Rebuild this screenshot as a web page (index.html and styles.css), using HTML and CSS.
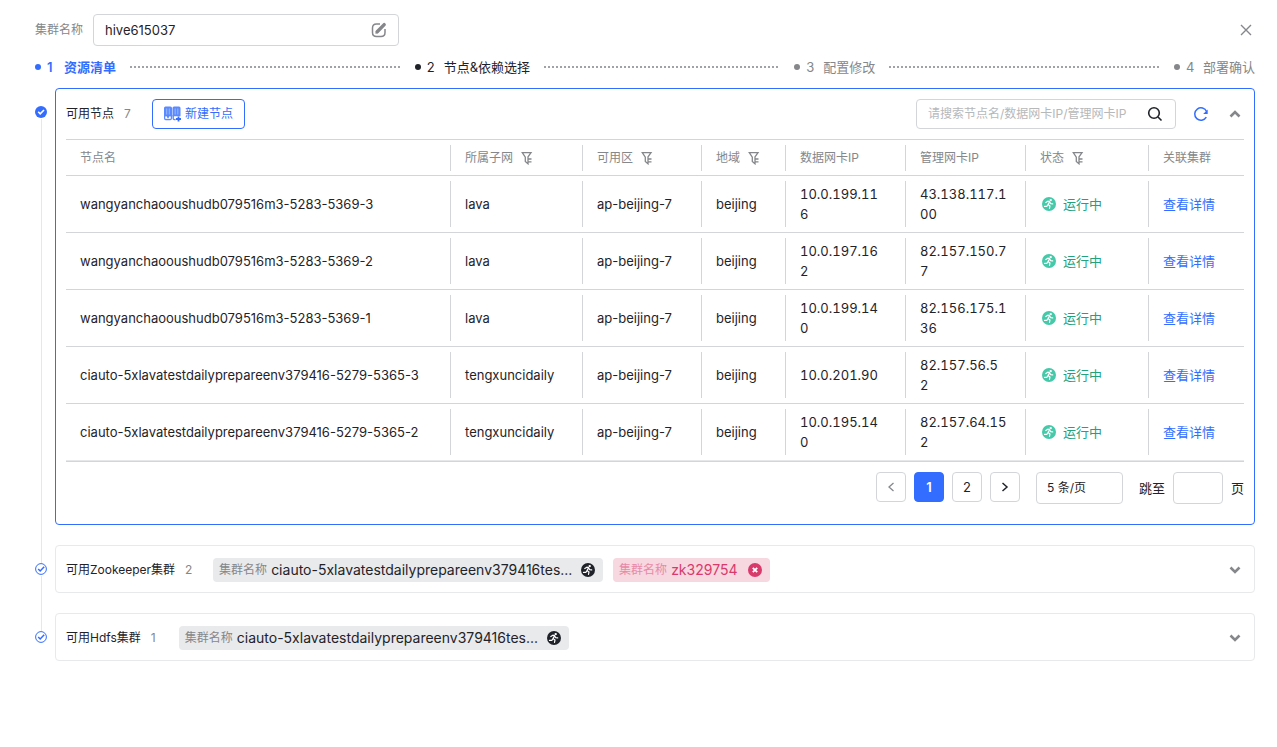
FILE: index.html
```html
<!DOCTYPE html>
<html lang="zh-CN">
<head>
    <meta charset="UTF-8">
    <title>部署集群</title>
    <link rel="stylesheet" href="styles.css">
</head>
<body>
<!--图标-->
<svg class="sprite" aria-hidden="true">
    <symbol id="filter" viewBox="0 0 12 14">
        <path d="M7 5.800L10 1.700H1.300l3 4.500v4.300L7 12.800zM7 8h3.500M7 10.800h3.500" fill="none" stroke="currentColor" stroke-width="1.300"/>
    </symbol>
    <symbol id="run" viewBox="0 0 14 14">
        <circle cx="7" cy="7" r="7" fill="currentColor"/>
        <circle cx="8.700" cy="3.100" r="1.200" fill="#fff"/>
        <path d="M3.800 5.500l2-1.300 1.700.5L6 7.600l2 1.300-.5 2.600M7.500 4.900l1.200 1.800 2 .2M5.900 7.900L4.800 9.400H2.500" fill="none" stroke="#fff" stroke-width="1.200" stroke-linecap="round" stroke-linejoin="round"/>
    </symbol>
    <symbol id="down" viewBox="0 0 12 8">
        <path d="M1.500 1.500L6 6l4.500-4.500" fill="none" stroke="currentColor" stroke-width="2.600"/>
    </symbol>
    <symbol id="check" viewBox="0 0 12 12">
        <circle cx="6" cy="6" r="5.400" fill="none" stroke="currentColor"/>
        <path d="M3.200 6l2 2 4-4.200" fill="none" stroke="currentColor" stroke-width="1.500"/>
    </symbol>
</svg>

<div class="page">
    <div class="top">
        <label for="clusterName">集群名称</label>
        <div class="name-box">
            <input type="text" id="clusterName" value="hive615037">
            <button class="icon-btn" aria-label="编辑">
                <svg width="16" height="16" viewBox="0 0 16 16" fill="none" stroke="currentColor"><path d="M9 2H5.500Q1.500 2 1.500 6v4.500q0 4 4 4H10q4 0 4-4V7" stroke-width="1.500"/><path d="M6.200 9.800l7-7.200" stroke-width="3.400" stroke-linecap="round"/><path d="M4.300 11.700l.7-3 2.300 2.300z" fill="currentColor" stroke="none"/></svg>
            </button>
        </div>
        <button class="icon-btn close" aria-label="关闭">
            <svg width="12" height="12" viewBox="0 0 12 12"><path d="M1 1l10 10M11 1L1 11" stroke="currentColor" stroke-width="1.400"/></svg>
        </button>
    </div>

    <div class="steps">
        <div class="step active"><i class="dot"></i><span class="num">1</span><span>资源清单</span><div class="dots"></div></div>
        <div class="step next"><i class="dot"></i><span class="num">2</span><span>节点&amp;依赖选择</span><div class="dots"></div></div>
        <div class="step"><i class="dot"></i><span class="num">3</span><span>配置修改</span><div class="dots"></div></div>
        <div class="step"><i class="dot"></i><span class="num">4</span><span>部署确认</span></div>
    </div>

    <div class="row">
        <div class="rail">
            <svg class="mark" width="12" height="12" viewBox="0 0 12 12"><circle cx="6" cy="6" r="6" fill="currentColor"/><path d="M3.200 5.800l2 2 3.800-3.800" fill="none" stroke="#fff" stroke-width="1.600"/></svg>
        </div>
        <div class="panel open">
            <div class="panel-head">
                <span class="title">可用节点</span>
                <span class="count">7</span>
                <button class="create">
                    <svg width="18" height="16" viewBox="0 0 18 16" fill="none" stroke="currentColor"><g opacity=".8"><path d="M0 2q0-1.500 1.500-1.500h5q1.500 0 1.500 1.500v8.500H0zM8.500 2q0-1.500 1.500-1.500h5q1.500 0 1.500 1.500v8.500h-8z" fill="currentColor" stroke="none"/><path d="M.7 9v3.500q0 1 1 1h4.600q1 0 1-1V9M9.200 9v3.500q0 1 1 1h1.500M3 12v-1.500h2V12" stroke-width="1.400"/></g><path d="M2.700 2.500v6M5.300 2.500v6M11.200 2.500v6M13.800 2.500v6" stroke="#fff" stroke-width=".4"/><path d="M1.500 10.500h1.500v2H1.500zM5 10.500h1.500v2H5zM10 10.500h8V16h-6v-3.500h-2z" fill="#fff" stroke="none"/><path d="M14.500 10.500v5M12 13h5" stroke-width="1.800"/></svg>
                    <span>新建节点</span>
                </button>
                <div class="search">
                    <input type="text" aria-label="搜索" placeholder="请搜索节点名/数据网卡IP/管理网卡IP">
                    <button class="icon-btn dark" aria-label="搜索"><svg width="16" height="16" viewBox="0 0 16 16" fill="none" stroke="currentColor" stroke-width="1.600"><circle cx="7" cy="7" r="5.300"/><path d="M11 11l3.500 3.500"/></svg></button>
                </div>
                <button class="icon-btn refresh" aria-label="刷新"><svg width="16" height="16" viewBox="0 0 16 16" fill="none"><path d="M13.300 11.200A6.200 6.200 0 1 1 13.600 5.500" stroke="currentColor" stroke-width="1.500"/><path d="M14.700 3.500v4.500h-4.500z" fill="currentColor"/></svg></button>
                <button class="icon-btn up" aria-label="收起"><svg width="12" height="8"><use href="#down"/></svg></button>
            </div>

            <table>
                <colgroup>
                    <col class="c-node"><col class="c-net"><col class="c-zone"><col class="c-area"><col class="c-ip"><col class="c-ip"><col class="c-state"><col class="c-link">
                </colgroup>
                <thead>
                <tr>
                    <th><div>节点名</div></th>
                    <th><div>所属子网<svg width="12" height="14"><use href="#filter"/></svg></div></th>
                    <th><div>可用区<svg width="12" height="14"><use href="#filter"/></svg></div></th>
                    <th><div>地域<svg width="12" height="14"><use href="#filter"/></svg></div></th>
                    <th><div>数据网卡IP</div></th>
                    <th><div>管理网卡IP</div></th>
                    <th><div>状态<svg width="12" height="14"><use href="#filter"/></svg></div></th>
                    <th><div>关联集群</div></th>
                </tr>
                </thead>
                <tbody>
                <tr>
                    <td><div><span>wangyanchaooushudb079516m3-5283-5369-3</span></div></td>
                    <td><div><span>lava</span></div></td>
                    <td><div><span>ap-beijing-7</span></div></td>
                    <td><div><span>beijing</span></div></td>
                    <td><div class="ip"><span>10.0.199.11<br>6</span></div></td>
                    <td><div class="ip"><span>43.138.117.1<br>00</span></div></td>
                    <td><div class="state"><svg width="14" height="14"><use href="#run"/></svg><span>运行中</span></div></td>
                    <td><div><a href="#">查看详情</a></div></td>
                </tr>
                <tr>
                    <td><div><span>wangyanchaooushudb079516m3-5283-5369-2</span></div></td>
                    <td><div><span>lava</span></div></td>
                    <td><div><span>ap-beijing-7</span></div></td>
                    <td><div><span>beijing</span></div></td>
                    <td><div class="ip"><span>10.0.197.16<br>2</span></div></td>
                    <td><div class="ip"><span>82.157.150.7<br>7</span></div></td>
                    <td><div class="state"><svg width="14" height="14"><use href="#run"/></svg><span>运行中</span></div></td>
                    <td><div><a href="#">查看详情</a></div></td>
                </tr>
                <tr>
                    <td><div><span>wangyanchaooushudb079516m3-5283-5369-1</span></div></td>
                    <td><div><span>lava</span></div></td>
                    <td><div><span>ap-beijing-7</span></div></td>
                    <td><div><span>beijing</span></div></td>
                    <td><div class="ip"><span>10.0.199.14<br>0</span></div></td>
                    <td><div class="ip"><span>82.156.175.1<br>36</span></div></td>
                    <td><div class="state"><svg width="14" height="14"><use href="#run"/></svg><span>运行中</span></div></td>
                    <td><div><a href="#">查看详情</a></div></td>
                </tr>
                <tr>
                    <td><div><span>ciauto-5xlavatestdailyprepareenv379416-5279-5365-3</span></div></td>
                    <td><div><span>tengxuncidaily</span></div></td>
                    <td><div><span>ap-beijing-7</span></div></td>
                    <td><div><span>beijing</span></div></td>
                    <td><div class="ip"><span>10.0.201.90</span></div></td>
                    <td><div class="ip"><span>82.157.56.5<br>2</span></div></td>
                    <td><div class="state"><svg width="14" height="14"><use href="#run"/></svg><span>运行中</span></div></td>
                    <td><div><a href="#">查看详情</a></div></td>
                </tr>
                <tr>
                    <td><div><span>ciauto-5xlavatestdailyprepareenv379416-5279-5365-2</span></div></td>
                    <td><div><span>tengxuncidaily</span></div></td>
                    <td><div><span>ap-beijing-7</span></div></td>
                    <td><div><span>beijing</span></div></td>
                    <td><div class="ip"><span>10.0.195.14<br>0</span></div></td>
                    <td><div class="ip"><span>82.157.64.15<br>2</span></div></td>
                    <td><div class="state"><svg width="14" height="14"><use href="#run"/></svg><span>运行中</span></div></td>
                    <td><div><a href="#">查看详情</a></div></td>
                </tr>
                </tbody>
            </table>

            <div class="pager">
                <button class="page-btn prev" aria-label="上一页"><svg width="8" height="10" viewBox="0 0 8 10"><path d="M6.500 1L2 5l4.500 4" fill="none" stroke="currentColor" stroke-width="1.300"/></svg></button>
                <button class="page-btn current">1</button>
                <button class="page-btn">2</button>
                <button class="page-btn" aria-label="下一页"><svg width="8" height="10" viewBox="0 0 8 10"><path d="M1.500 1L6 5 1.500 9" fill="none" stroke="currentColor" stroke-width="1.500"/></svg></button>
                <select class="size" aria-label="每页条数">
                    <option>5 条/页</option>
                </select>
                <label for="jump">跳至</label>
                <input type="text" id="jump" class="jump">
                <span>页</span>
            </div>
        </div>
    </div>

    <div class="row">
        <div class="rail">
            <svg class="mark" width="12" height="12"><use href="#check"/></svg>
        </div>
        <div class="panel">
            <span class="title">可用Zookeeper集群</span>
            <span class="count">2</span>
            <div class="tags">
                <div class="tag long"><span class="key">集群名称</span><span class="val">ciauto-5xlavatestdailyprepareenv379416tes...</span><svg width="14" height="14"><use href="#run"/></svg></div>
                <div class="tag error"><span class="key">集群名称</span><span class="val">zk329754</span><svg width="14" height="14" viewBox="0 0 14 14"><circle cx="7" cy="7" r="7" fill="currentColor"/><path d="M4.800 4.800l4.400 4.400M9.200 4.800L4.800 9.200" stroke="#fff" stroke-width="1.800"/></svg></div>
            </div>
            <button class="icon-btn" aria-label="展开"><svg width="12" height="8"><use href="#down"/></svg></button>
        </div>
    </div>

    <div class="row last">
        <div class="rail">
            <svg class="mark" width="12" height="12"><use href="#check"/></svg>
        </div>
        <div class="panel">
            <span class="title">可用Hdfs集群</span>
            <span class="count">1</span>
            <div class="tags">
                <div class="tag long"><span class="key">集群名称</span><span class="val">ciauto-5xlavatestdailyprepareenv379416tes...</span><svg width="14" height="14"><use href="#run"/></svg></div>
            </div>
            <button class="icon-btn" aria-label="展开"><svg width="12" height="8"><use href="#down"/></svg></button>
        </div>
    </div>
</div>
</body>
</html>
```
FILE: styles.css
```css
* {
    box-sizing: border-box;
}

body {
    margin: 0;
    background: #fff;
    color: #1f2329;
    font-family: Inter, "Noto Sans CJK SC", sans-serif;
    font-size: 13px;
    line-height: 20px;
}

button, input, select {
    margin: 0;
    padding: 0;
    color: inherit;
    font: inherit;
}

svg {
    display: block;
    flex: none;
}

.sprite {
    position: absolute;
    width: 0;
    height: 0;
}

.page {
    padding: 14px 22px 0 35px;
}

/* 顶部 */
.top {
    display: flex;
    align-items: center;
    height: 32px;
}

.top label {
    margin-right: 10px;
    color: #85878a;
    font-size: 12px;
}

.name-box, .search {
    display: flex;
    align-items: center;
    border: 1px solid #d3d5d8;
    border-radius: 4px;
}

.name-box {
    width: 306px;
    height: 32px;
    padding: 0 11px;
}

.name-box input, .search input {
    flex: 1;
    min-width: 0;
    border: 0;
    outline: 0;
    background: none;
}

.icon-btn {
    flex: none;
    border: 0;
    background: none;
    color: #85878a;
    cursor: pointer;
}

.close {
    margin: 0 3px 0 auto;
}

/* 步骤条 */
.steps {
    display: flex;
    align-items: center;
    height: 42px;
}

.step {
    display: flex;
    flex: 1;
    align-items: center;
    color: #85878a;
    white-space: nowrap;
}

.step:last-child {
    flex: none;
}

.step.active {
    color: #336dff;
    font-weight: 600;
}

.step.next {
    color: #1f2329;
}

.dot {
    width: 6px;
    height: 6px;
    margin-right: 6px;
    border-radius: 50%;
    background: currentColor;
}

.num {
    width: 17px;
}

.dots {
    flex: 1;
    height: 2px;
    margin: 0 15px 0 14px;
    background: repeating-linear-gradient(90deg, #a0a2a5 0 2px, transparent 2px 4px);
}

/* 分组 */
.row {
    display: flex;
}

.rail {
    position: relative;
    width: 20px;
    flex: none;
    color: #336dff;
}

.rail::before {
    content: "";
    position: absolute;
    top: 31px;
    bottom: -18px;
    left: 6px;
    width: 1px;
    background: #e6e7e9;
}

.last .rail::before {
    display: none;
}

.mark {
    margin-top: 18px;
}

.panel {
    display: flex;
    flex: 1;
    align-items: center;
    min-width: 0;
    height: 48px;
    margin-bottom: 20px;
    padding: 2px 13px 0 10px;
    border: 1px solid #e8e9eb;
    border-radius: 4px;
    font-size: 12px;
}

.panel.open {
    display: block;
    height: auto;
    padding: 10px 10px 20px;
    border-color: #336dff;
}

.panel-head {
    display: flex;
    align-items: center;
    height: 30px;
    margin-bottom: 10px;
    padding-right: 3px;
}

.count {
    min-width: 8px;
    margin-left: 10px;
    color: #85878a;
}

.create {
    display: flex;
    align-items: center;
    gap: 3px;
    height: 30px;
    margin-left: 20px;
    padding: 0 11px;
    border: 1px solid #336dff;
    border-radius: 4px;
    background: #fff;
    color: #336dff;
}

.search {
    width: 260px;
    height: 30px;
    margin-left: auto;
    padding: 0 12px 0 11px;
}

.search ::placeholder {
    color: #b6b8ba;
}

.dark {
    color: #1f2329;
}

.refresh {
    margin: 0 20px 0 17px;
    color: #336dff;
}

.up svg {
    transform: rotate(180deg);
}

/* 表格 */
table {
    width: 100%;
    table-layout: fixed;
    border-collapse: separate;
    border-spacing: 0;
    border-top: 1px solid #d3d5d8;
    border-bottom: 1px solid #d3d5d8;
    font-size: 13px;
}

.c-net { width: 132px; }
.c-zone { width: 119px; }
.c-area { width: 84px; }
.c-ip { width: 120px; }
.c-state { width: 123px; }
.c-link { width: 96px; }

th, td {
    padding: 0;
    border-bottom: 1px solid #d3d5d8;
    text-align: left;
    font-weight: 400;
}

tbody tr:last-child td {
    border-bottom-color: #e6e7e9;
}

th {
    height: 36px;
    color: #85878a;
    font-size: 12px;
}

td {
    height: 57px;
}

th div, td div {
    display: flex;
    align-items: center;
    height: 46px;
    padding: 0 14px;
    border-left: 1px solid #d3d5d8;
}

th div {
    gap: 8px;
    height: 26px;
}

th:first-child div, td:first-child div {
    border-left: 0;
}

.ip {
    font-variant-numeric: tabular-nums;
}

td .state {
    gap: 7px;
    padding-left: 16px;
    color: #45c9a9;
}

.state span {
    color: #21a17c;
}

a {
    color: #336dff;
    text-decoration: none;
}

/* 分页 */
.pager {
    display: flex;
    align-items: center;
    justify-content: flex-end;
    gap: 8px;
    margin-top: 10px;
    font-size: 13px;
}

.page-btn, .size, .jump {
    border: 1px solid #d3d5d8;
    border-radius: 4px;
    background: #fff;
}

.page-btn {
    display: flex;
    align-items: center;
    align-self: flex-start;
    justify-content: center;
    width: 30px;
    height: 30px;
}

.prev {
    color: #85878a;
}

.current {
    border-color: #336dff;
    background: #336dff;
    color: #fff;
    font-weight: 600;
}

.size {
    width: 87px;
    height: 32px;
    margin: 0 8px;
    padding-left: 10px;
    appearance: none;
    font-size: 12px;
}

.jump {
    width: 50px;
    height: 32px;
    padding: 0 8px;
}

/* 标签 */
.tags {
    display: flex;
    flex: 1;
    gap: 10px;
    min-width: 0;
    margin-left: 20px;
}

.tag {
    display: flex;
    align-items: center;
    height: 24px;
    padding: 0 8px 0 6px;
    border-radius: 4px;
    background: #e9eaec;
    white-space: nowrap;
}

.tag svg {
    margin-left: auto;
}

.long {
    width: 390px;
}

.key {
    margin-right: 4px;
    color: #85878a;
}

.val {
    font-size: 14px;
}

.error {
    width: 157px;
    background: #f7d7e0;
    color: #d93a6c;
}

.error .key {
    color: #e78aa7;
}
```
